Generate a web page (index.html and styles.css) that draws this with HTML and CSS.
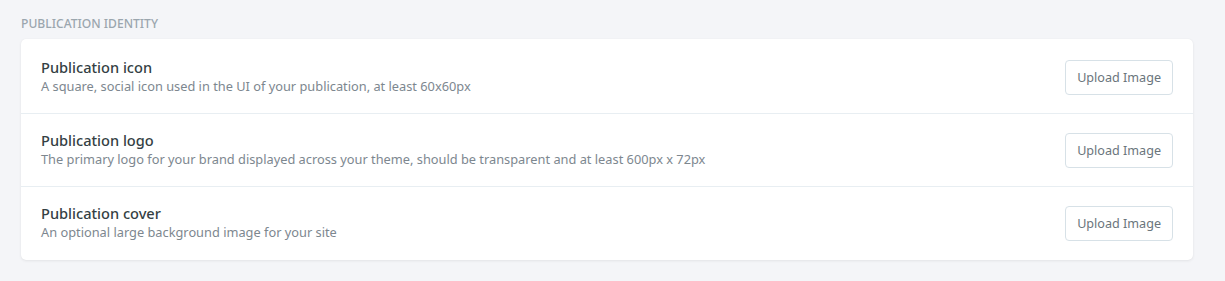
FILE: index.html
```html
<!DOCTYPE html>
<html lang="en">
<head>
  <meta charset="UTF-8" />
  <title>Publication identity</title>
  <link rel="stylesheet" href="styles.css">
</head>
<body>
  <section class="settings-section">
    <h4 class="section-title">Publication identity</h4>

    <div class="settings-card">
      <!-- Icon -->
      <div class="setting-row">
        <div class="setting-text">
          <h5>Publication icon</h5>
          <p>A square, social icon used in the UI of your publication, at least 60x60px</p>
        </div>
        <button class="btn-upload">Upload Image</button>
      </div>

      <!-- Logo -->
      <div class="setting-row">
        <div class="setting-text">
          <h5>Publication logo</h5>
          <p>The primary logo for your brand displayed across your theme, should be transparent and at least 600px x 72px</p>
        </div>
        <button class="btn-upload">Upload Image</button>
      </div>

      <!-- Cover -->
      <div class="setting-row">
        <div class="setting-text">
          <h5>Publication cover</h5>
          <p>An optional large background image for your site</p>
        </div>
        <button class="btn-upload">Upload Image</button>
      </div>
    </div>
  </section>
</body>
</html>
```
FILE: styles.css
```css
body {
  margin: 0;
  background: #f4f5f8;
  font-family: 'Noto Sans', 'Open Sans', sans-serif;
  color: #343f44;
}
.settings-section {
  padding: 17px 32px 20px 21px;
}
.section-title {
  margin: 0 0 8px;
  font-size: 12.1px;
  font-weight: 500;
  line-height: 14px;
  text-transform: uppercase;
  color: #9ba6ae;
}
.settings-card {
  padding-top: 2px;
  background: #fff;
  border-radius: 5px;
  box-shadow: 0 1px 3px rgba(0, 0, 0, 0.07), 0 0 1px rgba(0, 0, 0, 0.06);
}
.setting-row {
  display: flex;
  align-items: center;
  justify-content: space-between;
  height: 72px;
  padding: 0 20px;
  border-bottom: 1px solid #e8eef2;
}
.setting-row:last-child {
  border-bottom: none;
  height: 73px;
}
.setting-text {
  padding-bottom: 2px;
}
.setting-text h5 {
  margin: 0;
  font-size: 14.6px;
  font-weight: 500;
  line-height: 19px;
  color: #343f44;
}
.setting-text p {
  margin: 0;
  font-size: 12.8px;
  line-height: 18px;
  color: #7d878f;
}
.btn-upload {
  height: 35px;
  padding: 0 11px;
  background: #fff;
  border: 1px solid #d7e1e7;
  border-radius: 4px;
  font-family: inherit;
  font-size: 12.6px;
  color: #6a757c;
  cursor: pointer;
}
```
